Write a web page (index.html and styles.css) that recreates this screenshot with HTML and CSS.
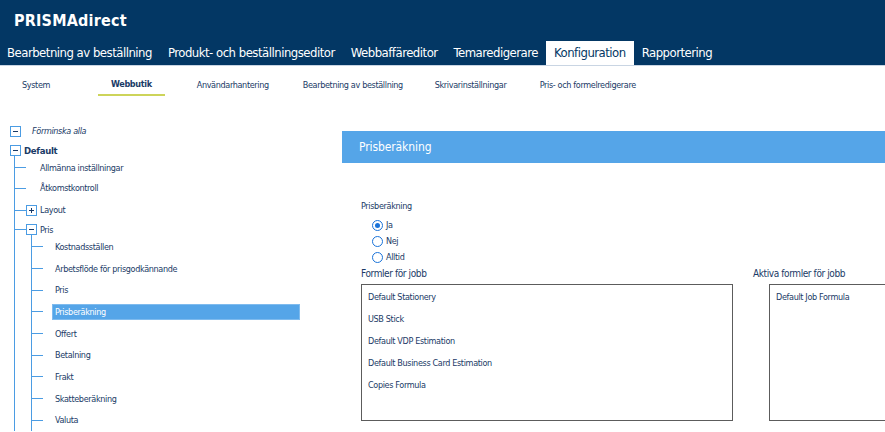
FILE: index.html
```html
<!DOCTYPE html>
<html lang="sv">
<head>
<meta charset="utf-8">
<title>PRISMAdirect</title>
<link rel="stylesheet" href="styles.css">
</head>
<body>
<header class="header">
  <div class="brand">PRISMAdirect</div>
  <nav class="tabs">
    <span class="tab">Bearbetning av beställning</span>
    <span class="tab">Produkt- och beställningseditor</span>
    <span class="tab">Webbaffäreditor</span>
    <span class="tab">Temaredigerare</span>
    <span class="tab active">Konfiguration</span>
    <span class="tab">Rapportering</span>
  </nav>
</header>
<nav class="subnav">
  <span class="sub s1">System</span>
  <span class="sub s2 active">Webbutik</span>
  <span class="sub s3">Användarhantering</span>
  <span class="sub s4">Bearbetning av beställning</span>
  <span class="sub s5">Skrivarinställningar</span>
  <span class="sub s6">Pris- och formelredigerare</span>
</nav>
<main class="main">
  <aside class="tree">
    <div class="row collapse-all"><span class="box minus"></span><span class="lbl italic">Förminska alla</span></div>
    <div class="row root"><span class="box minus"></span><span class="lbl bold">Default</span></div>
    <div class="level1">
      <div class="row leaf r-a"><span class="tick"></span><span class="leaf-lbl">Allmänna inställningar</span></div>
      <div class="row leaf r-b"><span class="tick"></span><span class="leaf-lbl">Åtkomstkontroll</span></div>
      <div class="row node r-c"><span class="tick"></span><span class="box plus"></span><span class="lbl">Layout</span></div>
      <div class="row node r-d"><span class="tick"></span><span class="box minus"></span><span class="lbl">Pris</span></div>
      <div class="level2">
        <div class="row leaf2"><span class="tick"></span><span class="item-lbl">Kostnadsställen</span></div>
        <div class="row leaf2"><span class="tick"></span><span class="item-lbl">Arbetsflöde för prisgodkännande</span></div>
        <div class="row leaf2"><span class="tick"></span><span class="item-lbl">Pris</span></div>
        <div class="row leaf2"><span class="tick"></span><span class="item-lbl selected">Prisberäkning</span></div>
        <div class="row leaf2"><span class="tick"></span><span class="item-lbl">Offert</span></div>
        <div class="row leaf2"><span class="tick"></span><span class="item-lbl">Betalning</span></div>
        <div class="row leaf2"><span class="tick"></span><span class="item-lbl">Frakt</span></div>
        <div class="row leaf2"><span class="tick"></span><span class="item-lbl">Skatteberäkning</span></div>
        <div class="row leaf2 last"><span class="tick"></span><span class="item-lbl">Valuta</span></div>
      </div>
    </div>
  </aside>
  <section class="panel">
    <h1 class="panel-title">Prisberäkning</h1>
    <div class="panel-body">
      <div class="field-label">Prisberäkning</div>
      <div class="radios">
        <label class="radio"><span class="dot checked"></span>Ja</label>
        <label class="radio"><span class="dot"></span>Nej</label>
        <label class="radio"><span class="dot"></span>Alltid</label>
      </div>
      <div class="lists">
        <div class="list-col">
          <div class="list-title">Formler för jobb</div>
          <div class="listbox wide">
            <div class="item">Default Stationery</div>
            <div class="item">USB Stick</div>
            <div class="item">Default VDP Estimation</div>
            <div class="item">Default Business Card Estimation</div>
            <div class="item">Copies Formula</div>
          </div>
        </div>
        <div class="list-col second">
          <div class="list-title">Aktiva formler för jobb</div>
          <div class="listbox narrow">
            <div class="item">Default Job Formula</div>
          </div>
        </div>
      </div>
    </div>
  </section>
</main>
</body>
</html>
```
FILE: styles.css
```css
html, body {
  margin: 0;
  padding: 0;
  background: #ffffff;
  overflow: hidden;
}
body {
  width: 885px;
  height: 432px;
  font-family: "DejaVu Sans Condensed", "DejaVu Sans", sans-serif;
  color: #1a3a66;
  font-size: 9px;
  letter-spacing: -0.35px;
}
.header {
  background: #033764;
  height: 65px;
  display: flex;
  flex-direction: column;
}
.brand {
  color: #ffffff;
  font-weight: bold;
  font-size: 16px;
  letter-spacing: 0.2px;
  height: 41px;
  line-height: 41px;
  padding-left: 14px;
}
.tabs {
  display: flex;
  height: 24px;
  margin-left: -1px;
}
.tab {
  color: #ffffff;
  font-size: 13px;
  letter-spacing: -0.5px;
  line-height: 24px;
  padding: 0 8px;
  white-space: nowrap;
}
.tab.active {
  background: #ffffff;
  color: #033764;
}
.subnav {
  display: flex;
  height: 36px;
  align-items: center;
  padding-left: 9px;
  border-top: 1px solid #c9d5e3;
}
.sub {
  padding: 0 13px;
  line-height: 20px;
  position: relative;
  top: 1px;
  white-space: nowrap;
  box-sizing: border-box;
}
.s1 { width: 89px; }
.s2 { margin-right: 19px; }
.s3 { width: 106px; }
.s4 { width: 132px; }
.s5 { width: 105px; }
.sub.active {
  font-weight: bold;
  border-bottom: 2px solid #cdd45a;
}
.main {
  display: flex;
  padding-top: 20px;
}
.tree {
  width: 342px;
  flex: none;
}
.row {
  display: flex;
  align-items: center;
  white-space: nowrap;
}
.box {
  width: 9px;
  height: 9px;
  border: 1px solid #4b9ce3;
  background: #ffffff;
  position: relative;
  flex: none;
}
.box::before {
  content: "";
  position: absolute;
  left: 2px;
  top: 4px;
  width: 5px;
  height: 1px;
  background: #1a3a66;
}
.box.plus::after {
  content: "";
  position: absolute;
  left: 4px;
  top: 2px;
  width: 1px;
  height: 5px;
  background: #1a3a66;
}
.collapse-all {
  height: 18px;
  padding-left: 10px;
}
.collapse-all .lbl {
  margin-left: 11px;
}
.italic { font-style: italic; }
.bold { font-weight: bold; font-size: 9.5px; letter-spacing: -0.3px; }
.root {
  height: 20px;
  padding-left: 10px;
}
.root .lbl { margin-left: 3px; }
.level1 {
  margin-left: 14px;
  border-left: 1px solid #4b9ce3;
  margin-top: -5px;
  padding-top: 3px;
}
.tick {
  width: 11px;
  height: 1px;
  background: #4b9ce3;
  flex: none;
}
.leaf { height: 22px; }
.leaf-lbl { padding-left: 14px; }
.r-a { height: 19px; }
.r-c { height: 22px; }
.r-d { height: 17px; }
.node .lbl { margin-left: 3px; }
.level2 {
  margin-left: 16px;
  border-left: 1px solid #4b9ce3;
  margin-top: -3px;
  padding-top: 1px;
}
.leaf2 { height: 21.7px; }
.item-lbl {
  margin-left: 9px;
  padding: 3px 3px;
}
.item-lbl.selected {
  background: #55a5e8;
  color: #ffffff;
  width: 242px;
  border: 1px solid #7fbbee;
  padding: 2px 2px;
}
.panel {
  flex: 1;
  min-width: 0;
  overflow: hidden;
  padding-top: 9px;
}
.panel-title {
  margin: 0;
  background: #55a5e8;
  color: #ffffff;
  font-weight: normal;
  font-size: 12px;
  letter-spacing: -0.1px;
  height: 32px;
  line-height: 32px;
  padding-left: 17px;
}
.panel-body {
  padding-left: 19px;
  padding-top: 36px;
}
.field-label {
  line-height: 14px;
}
.radios {
  display: flex;
  flex-direction: column;
  padding-left: 11px;
  margin-top: 4px;
}
.radio {
  display: flex;
  align-items: center;
  height: 16px;
}
.dot {
  width: 9px;
  height: 9px;
  border: 1px solid #1a73d9;
  border-radius: 50%;
  margin-right: 3px;
  position: relative;
  flex: none;
}
.dot.checked::after {
  content: "";
  position: absolute;
  left: 2px;
  top: 2px;
  width: 5px;
  height: 5px;
  border-radius: 50%;
  background: #1a73d9;
}
.lists {
  display: flex;
  margin-top: 2px;
}
.list-title {
  font-size: 10px;
  letter-spacing: -0.4px;
  line-height: 14px;
  margin-bottom: 3px;
}
.listbox {
  border: 1px solid #5c5c5c;
  height: 137px;
  box-sizing: border-box;
  padding-top: 4px;
}
.listbox.wide { width: 372px; }
.list-col.second { margin-left: 20px; flex: none; }
.listbox.narrow {
  width: 200px;
  margin-left: 16px;
}
.item {
  height: 22px;
  line-height: 16px;
  padding-left: 6px;
  white-space: nowrap;
}
```
